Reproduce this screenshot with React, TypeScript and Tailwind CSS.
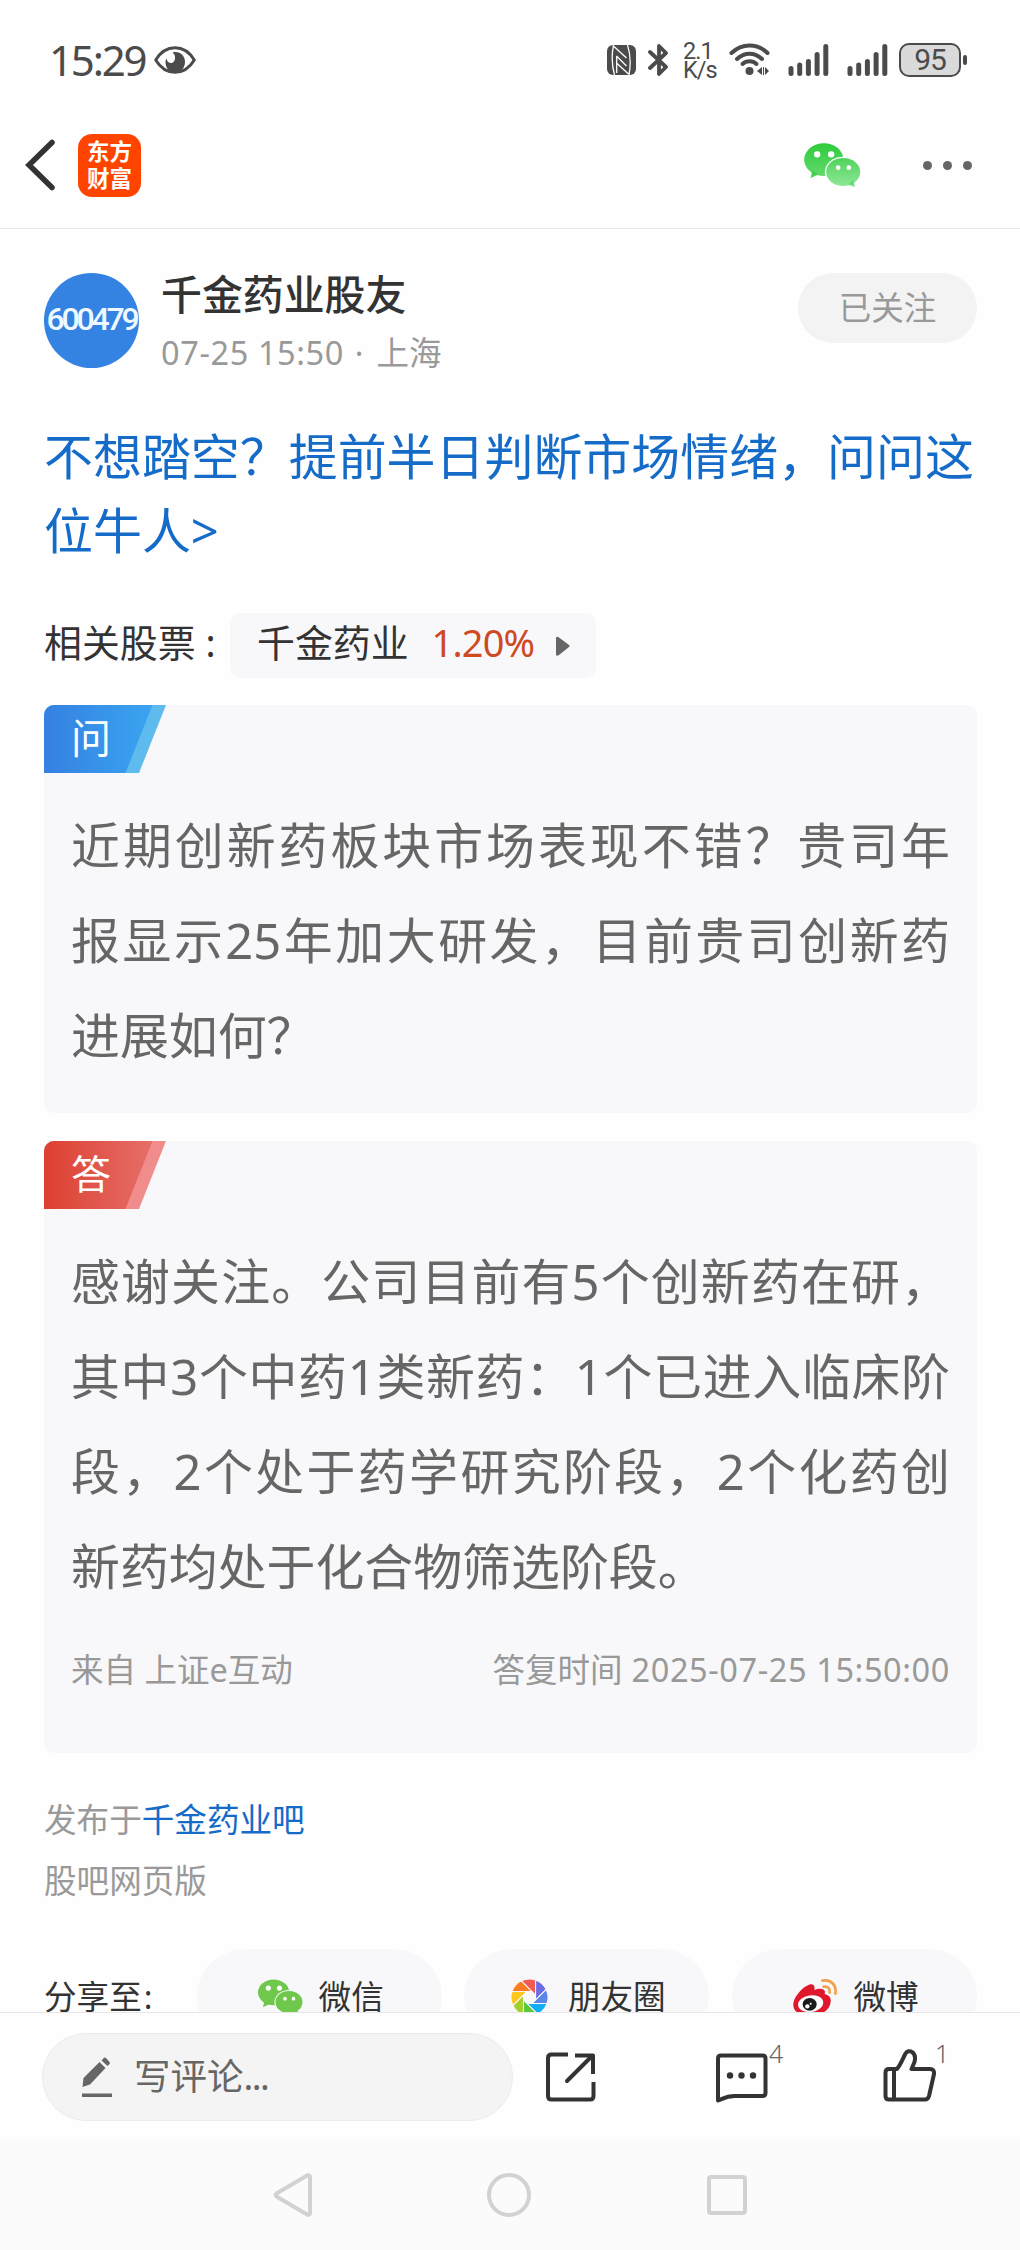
// src/App.tsx

import React from 'react';

const PINWHEEL_COLORS = [
  '#6b6be6',
  '#5a86e8',
  '#12aef5',
  '#5cc93c',
  '#a2cf2a',
  '#fcc71e',
  '#fb7d21',
  '#f55a52',
];

const EyeIcon: React.FC = () => (
  <svg width="42" height="28" viewBox="0 0 42 28" fill="none">
    <path
      d="M1.7 14C6.5 6 13 1.7 21 1.7S35.500 6 40.300 14C35.500 22 29 26.300 21 26.300S6.500 22 1.700 14Z"
      stroke="#4b4b4b"
      strokeWidth="3"
      strokeLinejoin="round"
    />
    <path
      d="M18.500 6.500C25 4.500 31 9 31 16C31 22 26.500 26.500 21 26.500S11.500 22 11.500 16C11.500 14.500 12 13.300 12.700 12.700C13 16 15.500 17.500 18 17C21.500 16 22.500 9 18.500 6.500Z"
      fill="#4b4b4b"
    />
  </svg>
);

const NfcIcon: React.FC = () => (
  <svg width="29" height="30" viewBox="0 0 29 30">
    <rect width="29" height="30" rx="6" fill="#4b4b4b" />
    <path
      d="M6.500 0C4.500 10 4.700 20 7.500 30M7 1.500L19.500 13M9.500 11L19.500 21M9.500 18L21.500 29M9.700 11V28M20.500 0C23.500 9 24 19 22 30"
      stroke="#fefefe"
      strokeWidth="1.300"
      fill="none"
    />
  </svg>
);

const BluetoothIcon: React.FC = () => (
  <svg
    width="21"
    height="32"
    viewBox="0 0 21 32"
    fill="none"
    stroke="#4b4b4b"
    strokeWidth="3.800"
    strokeLinecap="round"
    strokeLinejoin="round"
  >
    <path d="M2 8L18 23L11 30V2L18 9L2 24" />
  </svg>
);

const WifiIcon: React.FC = () => (
  <svg width="41" height="33" viewBox="0 0 41 33" fill="none">
    <g stroke="#4b4b4b" strokeWidth="4" strokeLinecap="round">
      <path d="M2.500 10C13 0 28 0 38.500 10" />
      <path d="M8 16C15.500 9 25.500 9 33 16" />
      <path d="M13.500 21C17.500 17.300 23.500 17.300 27.500 21" />
    </g>
    <circle cx="20.500" cy="28" r="4" fill="#4b4b4b" />
    <path d="M28 28L33 24V32Z M40 28L36 24V32Z" fill="#4b4b4b" />
    <path d="M34.500 24V32" stroke="#4b4b4b" />
  </svg>
);

const SignalIcon: React.FC = () => (
  <svg
    width="41"
    height="32"
    viewBox="0 0 41 32"
    stroke="#4b4b4b"
    strokeWidth="5"
    strokeLinecap="round"
  >
    <path d="M3 24.500V29.500M11.700 21V29.500M20.400 17.500V29.500M29.100 10.500V29.500M37.800 2.500V29.500" />
  </svg>
);

const WechatIcon: React.FC<{
  width: number;
  height: number;
  back: string;
  front: string;
  gap: string;
}> = ({ width, height, back, front, gap }) => (
  <svg width={width} height={height} viewBox="0 0 170 135">
    <defs>
      <linearGradient id="wechat-back" x1="0" y1="0" x2="0" y2="1">
        <stop offset="0" stopColor="#2fcb3c" />
        <stop offset="1" stopColor="#62d96c" />
      </linearGradient>
      <linearGradient id="wechat-front" x1="0" y1="0" x2="0" y2="1">
        <stop offset="0" stopColor="#4fd35b" />
        <stop offset="1" stopColor="#8ee896" />
      </linearGradient>
    </defs>
    <ellipse cx="59" cy="50" rx="59" ry="49" fill={back} />
    <path d="M24 84L19 106L44 94Z" fill={back} />
    <circle cx="39" cy="34" r="9.500" fill="#fefefe" />
    <circle cx="81" cy="34" r="9.500" fill="#fefefe" />
    <ellipse cx="117" cy="87" rx="55" ry="46" fill={gap} />
    <ellipse cx="117" cy="87" rx="51" ry="42" fill={front} />
    <path d="M130 124L152 133L148 112Z" fill={front} />
    <circle cx="102" cy="74" r="7" fill="#fefefe" />
    <circle cx="134" cy="74" r="7" fill="#fefefe" />
  </svg>
);

const MomentsIcon: React.FC = () => (
  <svg width="37" height="37" viewBox="-55 -55 110 110">
    {PINWHEEL_COLORS.map((color, i) => (
      <path
        key={color}
        d="M18 -52V7.500L49.500 -24A55 55 0 0 0 18 -52Z"
        fill={color}
        stroke="#f8f8fa"
        strokeWidth="3"
        transform={`rotate(${i * 45})`}
      />
    ))}
    <circle r="19" fill="#f8f8fa" />
  </svg>
);

const WeiboIcon: React.FC = () => (
  <svg width="44" height="37" viewBox="0 0 132 111" fill="none">
    <path
      d="M1 75C3 52 32 20 53 16C62 15 67 22 64 33C77 27 95 27 96 38L95 45C107 48 115 55 113 68C111 94 84 110 52 110C22 110 -1 98 1 75Z"
      fill="#e0182d"
    />
    <ellipse cx="53" cy="74" rx="38" ry="25" fill="#fff" transform="rotate(-8 53 74)" />
    <ellipse cx="50" cy="76" rx="21" ry="19" fill="#1c1a1b" />
    <circle cx="43" cy="82" r="6.500" fill="#fff" />
    <circle cx="53" cy="74" r="3" fill="#fff" />
    <g stroke="#f2a04c" strokeWidth="8" strokeLinecap="round">
      <path d="M88 5C113 0 132 18 127 44" />
      <path d="M92 23C104 21 112 28 110 41" />
    </g>
  </svg>
);

const PencilIcon: React.FC = () => (
  <svg width="30" height="40" viewBox="0 0 30 40" fill="#666">
    <path d="M1.500 21L17.500 5L23.500 11L8 27.500L0.500 30Z" />
    <path d="M19.500 3.500L22 0.800Q23 0 24 1L27.500 5Q28.500 6 27.500 7L25.500 9Z" />
    <rect y="36.500" width="30" height="3.500" />
  </svg>
);

const ShareIcon: React.FC = () => (
  <svg
    width="50"
    height="50"
    viewBox="0 0 50 50"
    fill="none"
    stroke="#333"
    strokeWidth="4"
    strokeLinejoin="round"
  >
    <path d="M22 2.500H5.500Q2 2.500 2 6V44Q2 47.500 5.500 47.500H44Q47.500 47.500 47.500 44V30" />
    <path d="M29 3.500H47V22" />
    <path d="M46 4L21 29" strokeLinecap="round" />
  </svg>
);

const CommentIcon: React.FC = () => (
  <svg width="53" height="50" viewBox="0 0 53 50" fill="none">
    <path
      d="M6 2.500H47.500Q50.500 2.500 50.500 5.500V40Q50.500 43 47.500 43H20C12 43 9 45 3 47.500V5.500Q3 2.500 6 2.500Z"
      stroke="#333"
      strokeWidth="4"
      strokeLinejoin="round"
    />
    <g fill="#333">
      <circle cx="15" cy="22.500" r="3.200" />
      <circle cx="26.500" cy="22.500" r="3.200" />
      <circle cx="38" cy="22.500" r="3.200" />
    </g>
  </svg>
);

const LikeIcon: React.FC = () => (
  <svg
    width="53"
    height="53"
    viewBox="0 0 53 53"
    fill="none"
    stroke="#333"
    strokeWidth="4"
    strokeLinejoin="round"
  >
    <path d="M6 20H14C18 15 20 9 22.500 4.500C24 2 27 1.500 29 3C32 5 32.500 9 31.500 13L28.500 20H47Q51.500 20 51 25L46 47Q45 50.500 42 50.500H6Q2.500 50.500 2.500 47V23.500Q2.500 20 6 20Z" />
    <path d="M11 20V50" />
  </svg>
);

const StatusBar: React.FC = () => (
  <div className="flex h-[102px] shrink-0 items-center pl-[49px] pr-[53px] pt-[17px] text-[#4b4b4b]">
    <span className="w-[105px] text-[42px] leading-[44px] tracking-[-2.200px]">15:29</span>
    <EyeIcon />
    <div className="ml-auto flex items-center">
      <NfcIcon />
      <span className="ml-[12px]">
        <BluetoothIcon />
      </span>
      <span className="ml-[14px] w-[34px] pt-[2px] font-[Roboto,sans-serif] text-[23.500px] leading-[19px] tracking-[-1px]">
        2.1
        <br />
        K/s
      </span>
      <span className="ml-[12px]">
        <WifiIcon />
      </span>
      <span className="ml-[18px]">
        <SignalIcon />
      </span>
      <span className="ml-[18px]">
        <SignalIcon />
      </span>
      <span className="ml-[11px] flex h-[34px] w-[62px] items-center justify-center rounded-[10px] border-[2.500px] border-[#4b4b4b] bg-[#dadada] font-[Roboto,sans-serif] text-[30px] leading-[30px] tracking-[-1px]">
        95
      </span>
      <span className="ml-[2px] h-[10px] w-[4px] rounded-full bg-[#4b4b4b]" />
    </div>
  </div>
);

const Header: React.FC = () => (
  <header className="flex h-[127px] shrink-0 items-center border-b border-[#e8e8e8] pl-[25px] pr-[48px]">
    <svg width="31" height="52" viewBox="0 0 31 52" fill="none">
      <path d="M27 3.500L4 26L27 48.500" stroke="#333" strokeWidth="5.500" strokeLinecap="round" />
    </svg>
    <div className="ml-[22px] flex h-[63px] w-[63px] flex-col items-center justify-center rounded-[14px] bg-[#ff4400] pb-px text-[22.500px] font-bold leading-[27px] text-white">
      <span>东方</span>
      <span>财富</span>
    </div>
    <span className="ml-auto">
      <WechatIcon
        width={57}
        height={45}
        back="url(#wechat-back)"
        front="url(#wechat-front)"
        gap="#fefefe"
      />
    </span>
    <div className="ml-[62px] flex gap-[11px]">
      <span className="h-[9px] w-[9px] rounded-full bg-[#666]" />
      <span className="h-[9px] w-[9px] rounded-full bg-[#666]" />
      <span className="h-[9px] w-[9px] rounded-full bg-[#666]" />
    </div>
  </header>
);

const Author: React.FC = () => (
  <div className="flex h-[95px] items-start">
    <div className="flex h-[95px] w-[95px] items-center justify-center rounded-full bg-[#3482e2] pb-[4px] font-[Roboto,sans-serif] text-[32px] font-medium tracking-[-3.200px] text-[#eef8ff]">
      600479
    </div>
    <div className="ml-[22px]">
      <div className="text-[40.900px] font-medium leading-[42px] text-[#333]">千金药业股友</div>
      <div className="mt-[17px] whitespace-pre text-[32.500px] leading-[42px] text-[#999]">
        <span className="tracking-[0.600px]">07-25 15:50</span>
        <span className="tracking-[2.300px]"> · </span>上海
      </div>
    </div>
    <button className="ml-auto h-[70px] w-[179px] rounded-full bg-[#f3f3f3] text-[32.500px] text-[#999]">
      已关注
    </button>
  </div>
);

const Tag: React.FC<{ kind: 'ask' | 'answer' }> = ({ kind }) => (
  <div className="grid h-[68px] w-[122px]">
    <svg className="col-start-1 row-start-1" width="122" height="68" viewBox="0 0 122 68">
      <defs>
        <linearGradient id={kind} x1="0" y1="0" x2="1" y2="0">
          <stop offset="0" stopColor={kind === 'ask' ? '#3580e1' : '#dd4031'} />
          <stop offset="1" stopColor={kind === 'ask' ? '#3aa5f0' : '#e66e68'} />
        </linearGradient>
      </defs>
      <path d="M0 0H122L95 68H0Z" fill={kind === 'ask' ? '#5fbaee' : '#f18c8c'} />
      <path d="M0 0H108.500L81.500 68H0Z" fill={`url(#${kind})`} />
    </svg>
    <span className="col-start-1 row-start-1 pl-[27px] text-[40px] leading-[66px] text-white">
      {kind === 'ask' ? '问' : '答'}
    </span>
  </div>
);

const Paragraph: React.FC<{ lines: string[] }> = ({ lines }) => (
  <div className="px-[27px] pt-[25px] text-[48.900px] leading-[95px] text-[#666]">
    {lines.map((line, i) => (
      <div
        key={line}
        className={
          i < lines.length - 1
            ? 'whitespace-nowrap [text-align-last:justify]'
            : 'whitespace-nowrap'
        }
      >
        {line}
      </div>
    ))}
  </div>
);

const SharePill: React.FC<{ label: string; children: React.ReactNode; gap: string }> = ({
  label,
  children,
  gap,
}) => (
  <div
    className={`flex h-[96px] w-[245px] items-center justify-center rounded-full bg-[#f8f8fa] pl-[3px] ${gap}`}
  >
    {children}
    <span>{label}</span>
  </div>
);

const BottomBar: React.FC = () => (
  <div className="flex h-[128px] shrink-0 items-center border-t border-[#e6e6e6] pl-[42px]">
    <div className="flex h-[88px] w-[471px] items-center rounded-full border border-[#ebebeb] bg-[#f4f4f4] pl-[39px] text-[36.500px] text-[#666]">
      <PencilIcon />
      <span className="ml-[22px]">
        写评论<span className="tracking-[-1.500px]">...</span>
      </span>
    </div>
    <span className="ml-[33px]">
      <ShareIcon />
    </span>
    <span className="ml-[119px] mt-[3px]">
      <CommentIcon />
    </span>
    <span className="mb-[47px] ml-px w-[14px] text-[25px] font-light leading-[26px] text-[#666]">4</span>
    <span className="ml-[100px] mb-[2px]">
      <LikeIcon />
    </span>
    <span className="mb-[47px] -ml-px text-[25px] font-light leading-[26px] text-[#666]">1</span>
  </div>
);

const NavBar: React.FC = () => (
  <nav className="flex h-[110px] shrink-0 items-center bg-[#fbfbfb] pl-[273px]">
    <svg width="40" height="44" viewBox="0 0 40 44" fill="none">
      <path
        d="M3.500 20.500L34 2.500Q37 1.500 37 4.500V39.500Q37 42.500 34 41.500L3.500 23.500Q1.500 22 3.500 20.500Z"
        stroke="#d2d2d2"
        strokeWidth="4"
      />
    </svg>
    <span className="ml-[174px] h-[44px] w-[44px] rounded-full border-4 border-[#d2d2d2]" />
    <span className="ml-[176px] h-[40px] w-[40px] rounded-[4px] border-4 border-[#d2d2d2]" />
  </nav>
);

const App: React.FC = () => {
  return (
    <div
      lang="zh-CN"
      className="flex h-[2250px] w-[1020px] flex-col overflow-hidden bg-[#fefefe] font-['Noto_Sans','Noto_Sans_CJK_SC',sans-serif]"
    >
      <StatusBar />
      <Header />
      <main className="min-h-0 flex-1 overflow-hidden pl-[44px] pr-[43px] pt-[44px]">
        <Author />
        <h1 className="mt-[52px] whitespace-nowrap text-[48.950px] leading-[73.700px] text-[#146bc8]">
          不想踏空？提前半日判断市场情绪，问问这
          <br />
          位牛人&gt;
        </h1>

        <div className="mt-[46px] flex h-[65px] items-center whitespace-pre text-[37.900px] text-[#333]">
          <span className="w-[186px] pb-[6px]">相关股票 :</span>
          <div className="flex h-[65px] w-[366px] items-center rounded-[10px] bg-[#f8f8fa] pl-[27px]">
            <span className="pb-[6px]">千金药业</span>
            <span className="ml-[23px] w-[124px] pb-[6px] tracking-[-0.800px] text-[#cd4a22]">1.20%</span>
            <svg width="15" height="24" viewBox="0 0 15 24">
              <path d="M0 3.500Q1 2 3 3.500L13 11Q14.500 12 13 13L3 21Q1 22.500 0 21Z" fill="#666" />
            </svg>
          </div>
        </div>

        <section className="mt-[27px] h-[408px] overflow-hidden rounded-[10px] bg-[#f8f8fa]">
          <Tag kind="ask" />
          <Paragraph
            lines={[
              '近期创新药板块市场表现不错？贵司年',
              '报显示25年加大研发，目前贵司创新药',
              '进展如何？',
            ]}
          />
        </section>

        <section className="mt-[28px] h-[612px] overflow-hidden rounded-[10px] bg-[#f8f8fa]">
          <Tag kind="answer" />
          <Paragraph
            lines={[
              '感谢关注。公司目前有5个创新药在研，',
              '其中3个中药1类新药：1个已进入临床阶',
              '段，2个处于药学研究阶段，2个化药创',
              '新药均处于化合物筛选阶段。',
            ]}
          />
          <div className="mt-[33px] flex justify-between px-[27px] text-[32.500px] leading-[46px] text-[#999]">
            <span>来自 上证e互动</span>
            <span>
              答复时间<span className="tracking-[0.600px]"> 2025-07-25 15:50:00</span>
            </span>
          </div>
        </section>

        <div className="mt-[36px] text-[32.600px] leading-[61px] text-[#999]">
          <p>
            发布于<a className="text-[#146bc8]">千金药业吧</a>
          </p>
          <p>股吧网页版</p>
        </div>

        <div className="mt-[38px] flex items-center justify-between text-[32.600px] text-[#333]">
          <span className="w-[130px] whitespace-nowrap">
            分享至<span className="pl-[2px]">:</span>
          </span>
          <SharePill label="微信" gap="gap-[16px]">
            <WechatIcon width={45} height={36} back="#6fc84b" front="#6fc84b" gap="#f8f8fa" />
          </SharePill>
          <SharePill label="朋友圈" gap="gap-[20px]">
            <MomentsIcon />
          </SharePill>
          <SharePill label="微博" gap="gap-[16px]">
            <WeiboIcon />
          </SharePill>
        </div>
      </main>
      <BottomBar />
      <NavBar />
    </div>
  );
};

export default App;
